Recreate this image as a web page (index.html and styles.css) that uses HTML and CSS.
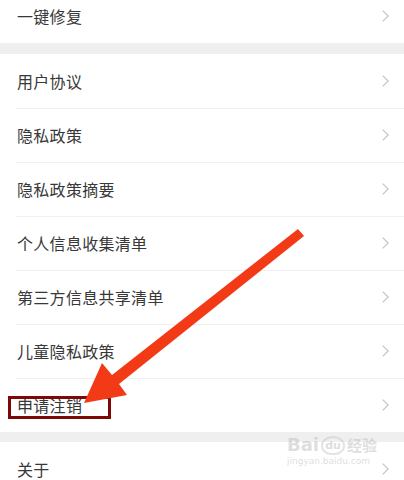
FILE: index.html
```html
<!DOCTYPE html>
<html lang="zh-CN">
<head>
<meta charset="utf-8">
<link rel="stylesheet" href="styles.css">
</head>
<body>
<div class="page">
  <div class="list first">
    <div class="row"><span class="label">一键修复</span><svg class="chev" viewBox="0 0 7 12"><polyline points="0.7,0.7 6.2,6 0.7,11.3"/></svg></div>
  </div>
  <div class="gap"></div>
  <div class="list">
    <div class="row"><span class="label">用户协议</span><svg class="chev" viewBox="0 0 7 12"><polyline points="0.7,0.7 6.2,6 0.7,11.3"/></svg></div>
    <div class="row"><span class="label">隐私政策</span><svg class="chev" viewBox="0 0 7 12"><polyline points="0.7,0.7 6.2,6 0.7,11.3"/></svg></div>
    <div class="row"><span class="label">隐私政策摘要</span><svg class="chev" viewBox="0 0 7 12"><polyline points="0.7,0.7 6.2,6 0.7,11.3"/></svg></div>
    <div class="row"><span class="label">个人信息收集清单</span><svg class="chev" viewBox="0 0 7 12"><polyline points="0.7,0.7 6.2,6 0.7,11.3"/></svg></div>
    <div class="row"><span class="label">第三方信息共享清单</span><svg class="chev" viewBox="0 0 7 12"><polyline points="0.7,0.7 6.2,6 0.7,11.3"/></svg></div>
    <div class="row"><span class="label">儿童隐私政策</span><svg class="chev" viewBox="0 0 7 12"><polyline points="0.7,0.7 6.2,6 0.7,11.3"/></svg></div>
    <div class="row"><span class="label">申请注销</span><svg class="chev" viewBox="0 0 7 12"><polyline points="0.7,0.7 6.2,6 0.7,11.3"/></svg></div>
  </div>
  <div class="gap short"></div>
  <div class="list">
    <div class="row"><span class="label">关于</span><svg class="chev" viewBox="0 0 7 12"><polyline points="0.7,0.7 6.2,6 0.7,11.3"/></svg></div>
  </div>

  <div class="highlight"></div>
  <svg class="arrow" viewBox="0 0 404 480">
    <polygon points="298,229 304,236 119,384 127,395 84,403 102,363 112,375"/>
  </svg>
  <div class="watermark">
    <div class="wm-top"><span class="wm-bai">Bai</span><span class="wm-paw">du</span><span class="wm-jy">经验</span></div>
    <div class="wm-url">jingyan.baidu.com</div>
  </div>
</div>
</body>
</html>
```
FILE: styles.css
```css
html, body {
  margin: 0;
  padding: 0;
  background: #ffffff;
}
.page {
  position: relative;
  width: 404px;
  height: 480px;
  overflow: hidden;
  background: #efefef;
  font-family: "Noto Sans CJK SC", "Noto Sans", sans-serif;
}
.list {
  background: #ffffff;
}
.list.first {
  margin-top: -11px;
}
.gap {
  height: 11px;
  background: #efefef;
}
.gap.short {
  height: 10px;
}
.row {
  height: 54px;
  display: flex;
  align-items: center;
  justify-content: space-between;
  padding: 0 15px 0 17px;
  box-sizing: border-box;
  position: relative;
}
.row + .row::before {
  content: "";
  position: absolute;
  left: 16px;
  right: 0;
  top: 0;
  height: 1px;
  background: #f0f0f0;
}
.label {
  font-size: 16px;
  color: #383838;
  line-height: 16px;
  letter-spacing: 0.3px;
}
.chev {
  width: 7px;
  height: 12px;
  fill: none;
  stroke: #c0c0c0;
  stroke-width: 1.1;
}
.highlight {
  position: absolute;
  left: 8px;
  top: 396px;
  width: 103px;
  height: 23px;
  box-sizing: border-box;
  border: 3px solid #7d0808;
}
.arrow {
  position: absolute;
  left: 0;
  top: 0;
  width: 404px;
  height: 480px;
  fill: #f23a17;
}
.watermark {
  position: absolute;
  left: 287px;
  top: 423px;
  width: 100px;
  color: rgba(190, 190, 190, 0.5);
  font-family: "DejaVu Sans", sans-serif;
  white-space: nowrap;
}
.wm-top {
  display: flex;
  align-items: flex-end;
  height: 32px;
}
.wm-bai {
  font-size: 18px;
  font-weight: bold;
  line-height: 20px;
}
.wm-paw {
  width: 24px;
  height: 19px;
  margin: 0 2px;
  border: 2px solid rgba(200, 200, 200, 0.5);
  border-radius: 50% 50% 45% 45%;
  box-sizing: border-box;
  font-size: 11px;
  font-weight: bold;
  line-height: 15px;
  text-align: center;
}
.wm-jy {
  font-family: "Noto Sans CJK SC", sans-serif;
  font-size: 15px;
  font-weight: bold;
  line-height: 20px;
}
.wm-url {
  font-size: 9px;
  line-height: 11px;
  margin-top: 1px;
}
```
